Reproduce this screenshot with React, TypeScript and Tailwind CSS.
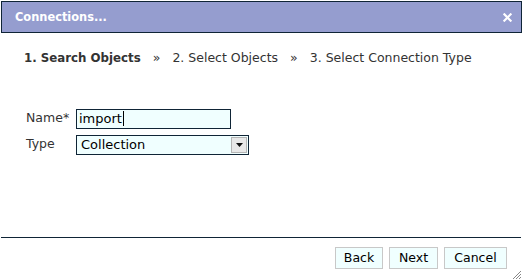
export default function App() {
  return (
    <div className="relative h-[279px] w-[524px] overflow-hidden bg-white font-['DejaVu_Sans',sans-serif] text-[12.5px] text-[#333]">
      {/* title bar */}
      <div className="ml-px mt-px flex h-[32px] w-[521px] items-center justify-between border border-[#0f2436] bg-[#959dcf] pl-[13px] pr-[9px]">
        <span className="pt-px text-[11.4px] font-bold text-white">Connections...</span>
        <svg viewBox="0 0 10 10" className="h-[9px] w-[9px]">
          <path d="M1.5 1.5l7 7M8.5 1.5l-7 7" stroke="white" strokeWidth={2.4} strokeLinecap="square" />
        </svg>
      </div>

      {/* steps */}
      <div className="mt-[16px] flex items-center pl-[24px] text-[12.5px] text-[#333]">
        <span className="text-[11.8px] font-bold">1. Search Objects</span>
        <span className="ml-[12px] mr-[12px]">»</span>
        <span>2. Select Objects</span>
        <span className="mx-[12px]">»</span>
        <span>3. Select Connection Type</span>
      </div>

      {/* form */}
      <div className="mt-[41px] flex flex-col gap-[6px] pl-[26px]">
        <div className="flex items-center">
          <span className="w-[50px]">Name*</span>
          <div className="flex h-[20px] w-[155px] items-center border border-[#0f2436] bg-[#f0ffff] pl-[2px] text-[13px] text-black">
            import<span className="ml-px h-[15px] w-px bg-black" />
          </div>
        </div>
        <div className="flex items-center">
          <span className="w-[50px]">Type</span>
          <div className="flex h-[20px] w-[173px] items-center justify-between border border-[#0f2436] bg-[#f0ffff] pl-[4px] pr-px text-[13px] text-black">
            <span>Collection</span>
            <div className="flex h-[16px] w-[16px] items-center justify-center border border-[#b5b5b5] bg-[#e8e8e8]">
              <svg viewBox="0 0 7 4" className="h-[4px] w-[7px]">
                <path d="M0 0h7L3.5 4z" fill="#111" />
              </svg>
            </div>
          </div>
        </div>
      </div>

      {/* footer */}
      <div className="absolute left-px top-[237px] h-px w-[520px] bg-[#0f2436]" />
      <div className="absolute right-[17px] top-[247px] flex gap-[6px] text-[12.5px] text-black">
        <button className="h-[22px] w-[48px] border border-[#c8c8c8] bg-[#f0ffff]">Back</button>
        <button className="h-[22px] w-[49px] border border-[#c8c8c8] bg-[#f0ffff]">Next</button>
        <button className="h-[22px] w-[63px] border border-[#c8c8c8] bg-[#f0ffff]">Cancel</button>
      </div>
      <svg viewBox="0 0 10 10" className="absolute bottom-0 right-[3px] h-[10px] w-[10px]">
        <path d="M10 2L2 10M10 5L5 10M10 8L8 10" stroke="#888" strokeWidth={1} />
      </svg>
    </div>
  );
}
